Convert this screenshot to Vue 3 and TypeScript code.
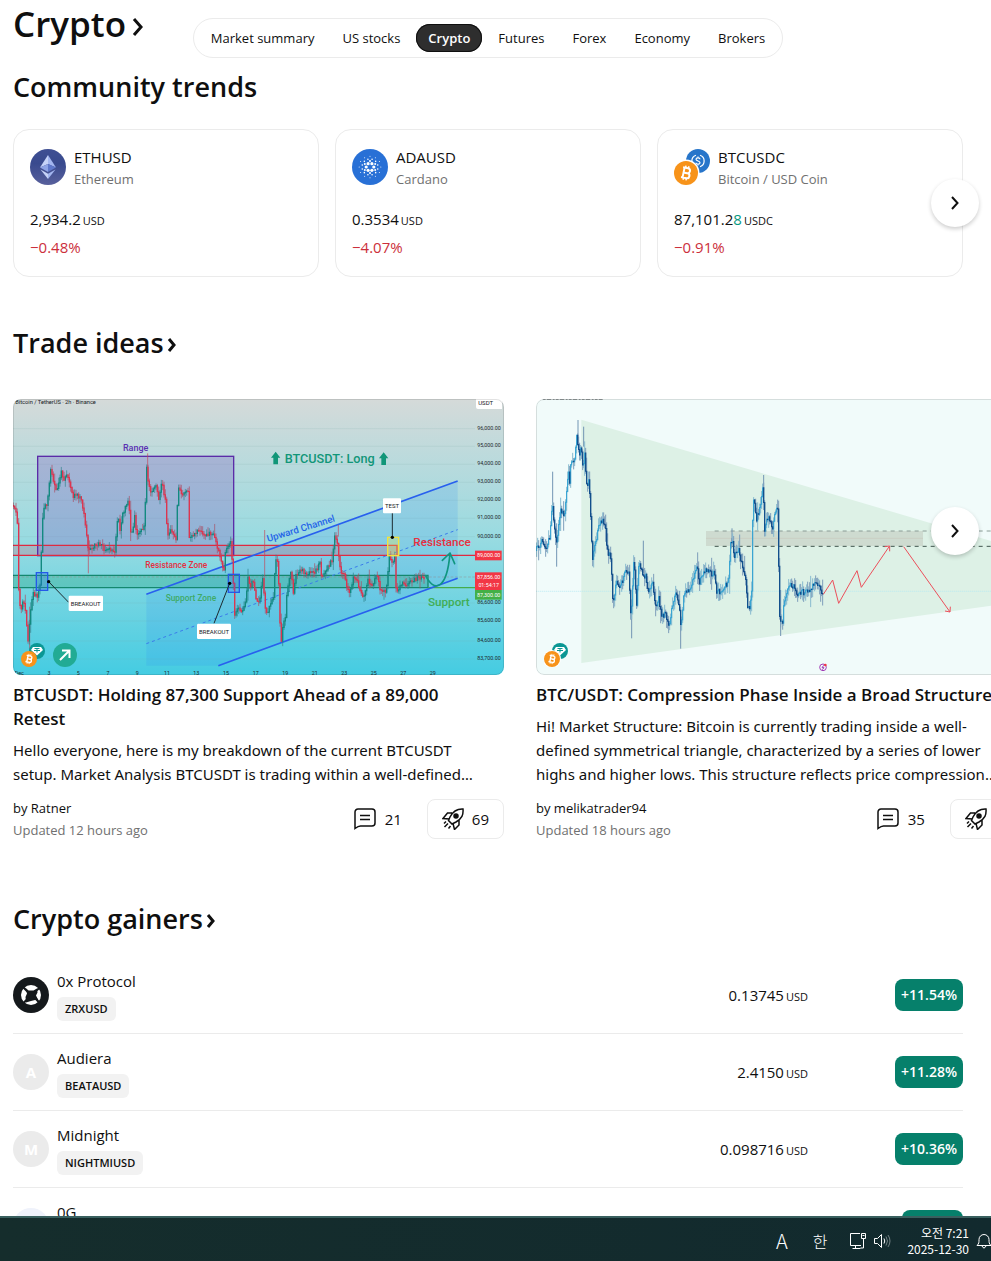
<script setup lang="ts">
type Point = [number, number]

interface Candles {
  upBody: string
  downBody: string
  upWick: string
  downWick: string
}

interface Trend {
  icon: 'eth' | 'ada' | 'btcusdc'
  symbol: string
  name: string
  price: string
  tick: string
  unit: string
  change: string
}

interface Idea {
  id: 'long' | 'triangle'
  title: string[]
  text: string[]
  author: string
  updated: string
  comments: number
  boosts: number
}

interface Gainer {
  name: string
  symbol: string
  letter: string
  tone: string
  price: string
  change: string
}

const tabs = ['Market summary', 'US stocks', 'Crypto', 'Futures', 'Forex', 'Economy', 'Brokers']
const activeTab = 'Crypto'

const trends: Trend[] = [
  { icon: 'eth', symbol: 'ETHUSD', name: 'Ethereum', price: '2,934.2', tick: '', unit: 'USD', change: '−0.48%' },
  { icon: 'ada', symbol: 'ADAUSD', name: 'Cardano', price: '0.3534', tick: '', unit: 'USD', change: '−4.07%' },
  { icon: 'btcusdc', symbol: 'BTCUSDC', name: 'Bitcoin / USD Coin', price: '87,101.2', tick: '8', unit: 'USDC', change: '−0.91%' },
]

const ideas: Idea[] = [
  {
    id: 'long',
    title: ['BTCUSDT: Holding 87,300 Support Ahead of a 89,000', 'Retest'],
    text: ['Hello everyone, here is my breakdown of the current BTCUSDT', 'setup. Market Analysis BTCUSDT is trading within a well-defined…'],
    author: 'Ratner',
    updated: 'Updated 12 hours ago',
    comments: 21,
    boosts: 69,
  },
  {
    id: 'triangle',
    title: ['BTC/USDT: Compression Phase Inside a Broad Structure'],
    text: [
      'Hi! Market Structure: Bitcoin is currently trading inside a well-',
      'defined symmetrical triangle, characterized by a series of lower',
      'highs and higher lows. This structure reflects price compression…',
    ],
    author: 'melikatrader94',
    updated: 'Updated 18 hours ago',
    comments: 35,
    boosts: 80,
  },
]

const gainers: Gainer[] = [
  { name: '0x Protocol', symbol: 'ZRXUSD', letter: '', tone: 'dark', price: '0.13745', change: '+11.54%' },
  { name: 'Audiera', symbol: 'BEATAUSD', letter: 'A', tone: 'grey', price: '2.4150', change: '+11.28%' },
  { name: 'Midnight', symbol: 'NIGHTMIUSD', letter: 'M', tone: 'grey', price: '0.098716', change: '+10.36%' },
  { name: '0G', symbol: '', letter: '', tone: 'pale', price: '', change: '' },
]

const longPath: Point[] = [
  [40, 345], [52, 360], [58, 420], [60, 600], [66, 670], [74, 630], [80, 660], [88, 750], [95, 660], [103, 610],
  [118, 615], [126, 570], [130, 400], [138, 340], [145, 350], [150, 300], [156, 240], [165, 275], [175, 305], [187, 240],
  [195, 265], [204, 250], [215, 290], [225, 320], [235, 310], [248, 330], [258, 380], [264, 440], [270, 485], [290, 462],
  [308, 458], [318, 480], [330, 470], [347, 492], [352, 440], [358, 365], [363, 420], [372, 370], [387, 330], [392, 360],
  [397, 440], [405, 400], [407, 370], [412, 420], [420, 430], [438, 410], [441, 290], [443, 225], [450, 290], [460, 305],
  [472, 280], [480, 325], [490, 275], [500, 330], [506, 430], [520, 420], [532, 445], [538, 290], [550, 310], [568, 300],
  [572, 440], [600, 420], [620, 435], [645, 425], [655, 470], [668, 510], [677, 545], [680, 480], [697, 450], [703, 560],
  [708, 680], [718, 650], [727, 670], [740, 640], [748, 560], [755, 590], [762, 560], [772, 620], [782, 640], [792, 560],
  [798, 640], [805, 670], [816, 640], [824, 620], [830, 510], [838, 510], [842, 650], [847, 755], [855, 690], [858, 710],
  [865, 600], [877, 540], [885, 615], [891, 550], [910, 540], [930, 550], [955, 540], [963, 505], [969, 560], [980, 540],
  [1000, 510], [1007, 440], [1015, 450], [1025, 540], [1035, 550], [1047, 600], [1055, 600], [1064, 560], [1075, 570],
  [1085, 600], [1095, 625], [1107, 570], [1120, 590], [1135, 550], [1142, 590], [1162, 610], [1172, 500], [1182, 520],
  [1188, 500], [1193, 610], [1205, 580], [1230, 580], [1250, 565], [1274, 560],
]

const trianglePath: Point[] = [
  [20, 480], [40, 450], [50, 480], [62, 440], [70, 345], [75, 400], [83, 455], [95, 350], [105, 380], [115, 290],
  [118, 230], [121, 290], [125, 220], [137, 210], [143, 140], [152, 195], [157, 165], [162, 240], [168, 180], [172, 290],
  [180, 265], [187, 420], [190, 505], [200, 460], [210, 400], [220, 390], [230, 420], [235, 480], [245, 500], [252, 640],
  [262, 580], [275, 590], [290, 540], [300, 550], [306, 700], [315, 500], [323, 640], [330, 510], [340, 550], [350, 560],
  [360, 610], [370, 570], [380, 650], [388, 620], [400, 680], [410, 670], [420, 710], [430, 650], [440, 610], [450, 640],
  [456, 705], [465, 610], [480, 600], [495, 560], [502, 520], [512, 575], [530, 540], [545, 550], [558, 545], [562, 610],
  [575, 600], [598, 580], [605, 450], [612, 450], [615, 500], [630, 480], [640, 530], [650, 560], [656, 650], [661, 660],
  [668, 600], [672, 310], [683, 390], [695, 340], [702, 285], [707, 430], [712, 390], [720, 380], [730, 420], [742, 350],
  [748, 360], [750, 680], [762, 700], [765, 630], [772, 620], [782, 580], [795, 590], [807, 620], [820, 605], [840, 600],
  [860, 575], [870, 590], [880, 605],
]

function priceAt(points: Point[], x: number): number {
  for (let i = 1; i < points.length; i++) {
    if (x <= points[i][0]) {
      const [x0, y0] = points[i - 1]
      const [x1, y1] = points[i]
      return y0 + ((y1 - y0) * (x - x0)) / (x1 - x0)
    }
  }
  return points[points.length - 1][1]
}

function noise(seed: number): number {
  const v = Math.sin(seed * 127.1 + 11.7) * 43758.5453
  return v - Math.floor(v)
}

// Turns a rough price line into candle bodies and wicks.
function buildCandles(points: Point[], step: number, jitter: number, wick: number): Candles {
  const out: Candles = { upBody: '', downBody: '', upWick: '', downWick: '' }
  const end = points[points.length - 1][0]
  let open = points[0][1]
  for (let x = points[0][0]; x < end; x += step) {
    const close = priceAt(points, x + step) + (noise(x) - 0.5) * jitter
    const top = Math.min(open, close)
    const bottom = Math.max(open, close) + 3
    const longWick = noise(x + 3) > 0.85 ? 2 : 1
    const high = top - noise(x + 1) * wick * longWick
    const low = bottom + noise(x + 2) * wick * longWick
    const body = `M${x} ${top.toFixed(1)}V${bottom.toFixed(1)}`
    const line = `M${x} ${high.toFixed(1)}V${low.toFixed(1)}`
    if (close < open) {
      out.upBody += body
      out.upWick += line
    } else {
      out.downBody += body
      out.downWick += line
    }
    open = close
  }
  return out
}

const longCandles = buildCandles(longPath, 4, 12, 15)
const triangleCandles = buildCandles(trianglePath, 3, 18, 24)

const priceScale: [string, number][] = [
  ['96,000.00', 113], ['95,000.00', 166], ['94,000.00', 220], ['93,000.00', 274], ['92,000.00', 328],
  ['91,000.00', 382], ['90,000.00', 437], ['86,600.00', 636], ['85,600.00', 690], ['84,600.00', 750], ['83,700.00', 804],
]
const dateScale: [string, number][] = [
  ['Dec', 58], ['3', 147], ['5', 235], ['7', 324], ['9', 412], ['11', 501], ['13', 589], ['15', 678],
  ['17', 767], ['19', 856], ['21', 944], ['23', 1033], ['25', 1121], ['27', 1210], ['29', 1298],
]

function ring(count: number, radius: number, size: number, phase: number) {
  return Array.from({ length: count }, (_, i) => {
    const a = ((i + phase) * 2 * Math.PI) / count
    return { x: 18 + radius * Math.cos(a), y: 18 + radius * Math.sin(a), r: size }
  })
}
const adaDots = [...ring(6, 3.8, 1.6, 0), ...ring(6, 6, 1, 0.5), ...ring(12, 8, 0.8, 0.5), ...ring(12, 10.8, 0.5, 0)]
</script>

<template>
  <div class="desktop">
    <main class="page">
      <header class="top">
        <h1><a href="#crypto">Crypto<svg class="chev-lg" viewBox="0 0 12 20" aria-hidden="true"><path d="M2 2l7 8-7 8" /></svg></a></h1>
        <nav class="tabs" aria-label="Markets">
          <a v-for="tab in tabs" :key="tab" href="#" class="tab" :class="{ active: tab === activeTab }">{{ tab }}</a>
        </nav>
      </header>

      <section class="trends">
        <h2>Community trends</h2>
        <div class="carousel">
          <div class="trend-grid">
            <a v-for="t in trends" :key="t.symbol" href="#" class="trend">
              <span class="trend-head">
                <svg v-if="t.icon === 'eth'" class="coin" viewBox="0 0 36 36" aria-hidden="true">
                  <defs>
                    <linearGradient id="ethbg" x1="0" y1="0" x2="0" y2="1">
                      <stop offset="0" stop-color="#3f4f93" /><stop offset=".4" stop-color="#394a8e" /><stop offset="1" stop-color="#58609c" />
                    </linearGradient>
                  </defs>
                  <circle cx="18" cy="18" r="18" fill="url(#ethbg)" />
                  <path d="M18 6l-8 12.5 8-3.5z" fill="#c6d3f8" /><path d="M18 6l8 12.5-8-3.5z" fill="#a3b6f0" />
                  <path d="M18 15l-8 3.5 8 4.5z" fill="#8ea3e6" /><path d="M18 15l8 3.5-8 4.5z" fill="#5f78cb" />
                  <path d="M10.500 20.500l7.500 4.300V30z" fill="#c6d3f8" /><path d="M25.500 20.500L18 24.800V30z" fill="#a3b6f0" />
                </svg>
                <svg v-else-if="t.icon === 'ada'" class="coin" viewBox="0 0 36 36" aria-hidden="true">
                  <circle cx="18" cy="18" r="18" fill="#2870d6" />
                  <circle v-for="(d, i) in adaDots" :key="i" :cx="d.x" :cy="d.y" :r="d.r" fill="#fff" />
                </svg>
                <svg v-else class="coin" viewBox="0 0 36 36" aria-hidden="true">
                  <circle cx="24" cy="12" r="12" fill="#2775ca" />
                  <g fill="none" stroke="#fff" stroke-width="1.200">
                    <path d="M22 6.300a6 6 0 0 0 0 11.400M26 6.300a6 6 0 0 1 0 11.400" />
                    <path d="M26 10.300c0-2-4-2-4 0s4 1.400 4 3.400-4 2-4 0M24 7.500v1.300M24 15.200v1.300" />
                  </g>
                  <circle cx="12" cy="24" r="13.500" fill="#fff" />
                  <circle cx="12" cy="24" r="12" fill="#f7931a" />
                  <g transform="translate(12 24) rotate(12)" fill="none" stroke="#fff" stroke-width="2">
                    <path d="M-4-5h5a2.400 2.400 0 0 1 0 5h-3.500M-4 5h5.500a2.500 2.500 0 0 0 0-5M-2.500-5V5" />
                    <path d="M-1.500-7.200V-5M1.500-7.200V-5M-1.500 5v2.200M1.500 5v2.200" stroke-width="1.500" />
                  </g>
                </svg>
                <span class="trend-names"><span class="symbol">{{ t.symbol }}</span><span class="muted">{{ t.name }}</span></span>
              </span>
              <span class="trend-price">{{ t.price }}<span class="tick">{{ t.tick }}</span><small>{{ t.unit }}</small></span>
              <span class="trend-change">{{ t.change }}</span>
            </a>
          </div>
          <button type="button" class="next next-trend" aria-label="Next trends">
            <svg viewBox="0 0 10 16" aria-hidden="true"><path d="M2 2l5.500 6L2 14" /></svg>
          </button>
        </div>
      </section>

      <section class="ideas">
        <h2><a href="#ideas">Trade ideas<svg class="chev" viewBox="0 0 10 16" aria-hidden="true"><path d="M2 2l5 6-5 6" /></svg></a></h2>
        <div class="carousel">
          <div class="idea-track">
            <article v-for="idea in ideas" :key="idea.id" class="idea">
              <div class="thumb">
                <svg v-if="idea.id === 'long'" class="chart" viewBox="39 27 1473 828" preserveAspectRatio="xMidYMid slice" role="img" aria-label="BTCUSDT chart">
                  <defs>
                    <linearGradient id="sky" x1="0" y1="0" x2="0" y2="1">
                      <stop offset="0" stop-color="#d5dad9" /><stop offset=".5" stop-color="#99dbe1" /><stop offset="1" stop-color="#44cce2" />
                    </linearGradient>
                  </defs>
                  <rect x="39" y="27" width="1473" height="828" fill="url(#sky)" />
                  <path v-for="[label, y] in priceScale" :key="'g' + label" :d="`M39 ${y + 3}H1425`" stroke="#7fa9ad" stroke-opacity=".25" stroke-width="2" />
                  <path d="M439 613L1373 273V565L655 827H439z" fill="#2f8cf5" fill-opacity=".17" />
                  <rect x="39" y="466" width="1152" height="30" fill="#e33b4e" fill-opacity=".2" />
                  <rect x="39" y="556" width="1245" height="37" fill="#1ea172" fill-opacity=".3" />
                  <rect x="113" y="199" width="588" height="298" fill="#8069c4" fill-opacity=".34" stroke="#5b2ca8" stroke-width="4" />
                  <path d="M39 466H1191V496M39 496H1425" fill="none" stroke="#df2a40" stroke-width="4" />
                  <path d="M39 556H1284V593M39 593H1284" fill="none" stroke="#14886f" stroke-width="4" />
                  <path d="M1284 593H1425" stroke="#45ac4b" stroke-width="4" />
                  <path d="M39 561H1425" stroke="#9a7a7a" stroke-opacity=".6" stroke-width="2" stroke-dasharray="8 5" />
                  <path d="M439 613L1373 273M655 827L1373 565" stroke="#2860ee" stroke-width="5" />
                  <path d="M439 761L1373 419" stroke="#3a7bea" stroke-width="3" stroke-dasharray="9 9" />
                  <path d="M89 650V785M265 440V550M443 190V260M794 420V560M1015 405V440" stroke="#c44357" stroke-width="2" />
                  <path :d="longCandles.upWick" stroke="#2f8289" stroke-width="2" />
                  <path :d="longCandles.downWick" stroke="#a94b62" stroke-width="2" />
                  <path :d="longCandles.upBody" stroke="#128a80" stroke-width="4" />
                  <path :d="longCandles.downBody" stroke="#dd3550" stroke-width="4" />
                  <g fill="#2962ff" fill-opacity=".22" stroke="#2459e8" stroke-width="4">
                    <rect x="109" y="548" width="34" height="53" /><rect x="685" y="553" width="33" height="54" />
                  </g>
                  <rect x="1163" y="442" width="33" height="55" fill="#f4e94c" fill-opacity=".3" stroke="#f2e33c" stroke-width="4" />
                  <path d="M146 575L206 637M689 580L642 700M1177 442V368" stroke="#1c2b30" stroke-width="3" />
                  <circle cx="146" cy="575" r="5" /><circle cx="689" cy="580" r="5" /><circle cx="1177" cy="442" r="5" />
                  <g fill="#fff">
                    <rect x="206" y="617" width="103" height="46" rx="4" /><rect x="591" y="701" width="102" height="46" rx="4" /><rect x="1149" y="325" width="54" height="45" rx="3" />
                    <path d="M1428 27h78v30h-72q-6 0-6-6z" />
                  </g>
                  <g font-size="18" text-anchor="middle" fill="#15191c">
                    <text x="257" y="647">BREAKOUT</text><text x="642" y="731">BREAKOUT</text><text x="1176" y="355">TEST</text><text x="1457" y="44">USDT</text>
                  </g>
                  <path d="M1277 557C1300 605 1340 605 1350 490M1327 511L1350 489 1364 521" fill="none" stroke="#109680" stroke-width="5" stroke-linecap="round" stroke-linejoin="round" />
                  <text x="46" y="41" font-size="17" fill="#15191c">Bitcoin / TetherUS · 2h · Binance</text>
                  <text x="407" y="182" font-size="27" font-weight="500" text-anchor="middle" fill="#5b31b2">Range</text>
                  <text x="436" y="535" font-size="25" font-weight="500" fill="#e52e3f">Resistance Zone</text>
                  <text x="497" y="634" font-size="25" font-weight="500" fill="#3faa66">Support Zone</text>
                  <text x="989" y="220" font-size="38" font-weight="500" text-anchor="middle" fill="#119678">BTCUSDT: Long</text>
                  <path d="M827 185l14 18h-7v20h-14v-20h-7zM1151 187l14 18h-7v20h-14v-20h-7z" fill="#119678" />
                  <text transform="translate(804 456) rotate(-17)" font-size="29" font-weight="500" fill="#2464e8">Upward Channel</text>
                  <text x="1240" y="468" font-size="35" font-weight="500" fill="#e8303f">Resistance</text>
                  <text x="1284" y="647" font-size="35" font-weight="500" fill="#40ad55">Support</text>
                  <g font-size="16" text-anchor="middle" fill="#1d292c">
                    <text v-for="[label, y] in priceScale" :key="label" x="1467" :y="y + 6">{{ label }}</text>
                    <text v-for="[label, x] in dateScale" :key="label" :x="x" y="856">{{ label }}</text>
                  </g>
                  <rect x="1425" y="482" width="80" height="29" fill="#f23645" /><rect x="1425" y="547" width="80" height="53" fill="#f23645" /><rect x="1425" y="600" width="80" height="29" fill="#43b047" />
                  <g font-size="16" text-anchor="middle" fill="#fff">
                    <text x="1466" y="502">89,000.00</text><text x="1466" y="566">87,856.00</text><text x="1466" y="591">01:54:17</text><text x="1466" y="620">87,300.00</text>
                  </g>
                </svg>
                <svg v-else class="chart" viewBox="18 27 1473 828" preserveAspectRatio="xMidYMid slice" role="img" aria-label="BTC/USDT chart">
                  <rect x="18" y="27" width="1473" height="828" fill="#f1fbfa" />
                  <path d="M154 89L1491 485V632L154 819z" fill="#ddf1e6" />
                  <rect x="528" y="423" width="651" height="45" fill="#b9bdb3" fill-opacity=".42" />
                  <path d="M528 445H1179" stroke="#c3b8ae" stroke-width="1" />
                  <path d="M554 423H1491" stroke="#8a9c96" stroke-width="3" stroke-dasharray="12 12" />
                  <path d="M554 469H1491" stroke="#41564f" stroke-width="3" stroke-dasharray="12 12" />
                  <path d="M18 604H1491" stroke="#b4eaf2" stroke-width="2" stroke-dasharray="4 2" />
                  <path d="M68 245V345M144 90V140M161 110V170M80 400V530M305 650V745M340 452V550M452 690V776M606 415V470M701 255V300M752 600V738" stroke="#7295b4" stroke-width="3" />
                  <path :d="triangleCandles.upWick" stroke="#88bbcf" stroke-width="3" />
                  <path :d="triangleCandles.downWick" stroke="#7d9dbb" stroke-width="3" />
                  <path :d="triangleCandles.upBody" stroke="#2a9fd2" stroke-width="3" />
                  <path :d="triangleCandles.downBody" stroke="#124f8c" stroke-width="4" />
                  <path d="M880 613L908 570 926 640 981 542 994 592 1078 469M1064 470L1079 468V484M1121 470L1260 666M1245 663L1260 666 1261 650" fill="none" stroke="#ec4f5b" stroke-width="3" />
                  <circle cx="879" cy="832" r="10" fill="none" stroke="#a13bb5" stroke-width="3" /><path d="M881 826l-5 7h6l-5 6" fill="none" stroke="#a13bb5" stroke-width="3" /><circle cx="886" cy="825" r="4" fill="#f23645" />
                  <path d="M38 28H218" stroke="#7d8587" stroke-width="3" stroke-dasharray="9 3 14 4 6 3" />
                </svg>
                <span class="thumb-icons">
                  <svg class="pair" viewBox="0 0 24 24" aria-hidden="true">
                    <circle cx="16" cy="8" r="8" fill="#0b9794" />
                    <path d="M12 4h8l2 3-6 5.500L10 7z" fill="#fff" /><path d="M13.500 5.500h5M16 5.500v4M13 7.500h6" stroke="#0b9794" fill="none" />
                    <circle v-if="idea.id === 'triangle'" cx="8" cy="16" r="9" fill="#fff" />
                    <circle cx="8" cy="16" r="8" fill="#f7931a" />
                    <g transform="translate(8 16) rotate(12)" fill="none" stroke="#fff" stroke-width="1.400">
                      <path d="M-3-3.200h4a1.500 1.500 0 0 1 0 3.200h-2.500M-3 3.200h4.200a1.600 1.600 0 0 0 0-3.200M-1.600-3.200V3.200" />
                      <path d="M-1-5v1.800M1-5v1.800M-1 3.200V5M1 3.200V5" stroke-width="1" />
                    </g>
                  </svg>
                  <svg v-if="idea.id === 'long'" class="direction" viewBox="0 0 24 24" aria-hidden="true">
                    <circle cx="12" cy="12" r="12" fill="#22ab94" />
                    <path d="M7 17l9-9M9 7.500h7.500V15" fill="none" stroke="#fff" stroke-width="2" />
                  </svg>
                </span>
              </div>
              <h3><span v-for="line in idea.title" :key="line">{{ line }}</span></h3>
              <p><span v-for="line in idea.text" :key="line">{{ line }}</span></p>
              <footer>
                <div class="byline"><a href="#">by {{ idea.author }}</a><span class="muted">{{ idea.updated }}</span></div>
                <a class="comments" href="#" aria-label="Comments">
                  <svg viewBox="0 0 22 22" aria-hidden="true"><path d="M1 20.500V4a3 3 0 0 1 3-3h14a3 3 0 0 1 3 3v11a3 3 0 0 1-3 3H6.500c-2 0-3.500 1-5.500 2.500zM6 7.500h10M6 11.500h10" /></svg>{{ idea.comments }}
                </a>
                <button type="button" class="boost">
                  <svg viewBox="0 0 22 22" aria-hidden="true">
                    <path d="M21 1c-6-.3-10 2-13 8l-1.500 3.500 3.500 3.500L14 14c6-3.500 7.500-7 7-13zM10 5H5.500L1 10.500l6.500.5M17 12v5l-4.500 4.500-1.500-6M4 13.500l-2 2M6 15.500L2.500 19M8.500 18l-2 2.500" />
                    <circle cx="14" cy="8" r="2" />
                  </svg>{{ idea.boosts }}
                </button>
              </footer>
            </article>
          </div>
          <button type="button" class="next next-idea" aria-label="Next ideas">
            <svg viewBox="0 0 10 16" aria-hidden="true"><path d="M2 2l5.500 6L2 14" /></svg>
          </button>
        </div>
      </section>

      <section class="gainers">
        <h2><a href="#gainers">Crypto gainers<svg class="chev" viewBox="0 0 10 16" aria-hidden="true"><path d="M2 2l5 6-5 6" /></svg></a></h2>
        <table aria-label="Crypto gainers">
          <tbody>
            <tr v-for="g in gainers" :key="g.name">
              <td>
                <div class="asset">
                  <span class="avatar" :class="g.tone">
                    <svg v-if="g.tone === 'dark'" viewBox="0 0 36 36" aria-hidden="true">
                      <circle cx="18" cy="18" r="10" fill="#fff" />
                      <path d="M12.500 11l3 2.500h5l3.500-2 .5 4-1.500 3 2.500 5-3.500-.5-4 1-5 1.500-.5-5.500 1.500-3.500z" fill="#15191c" />
                      <path d="M9.500 9.500l6 6M27 10.500l-6 5M10 26.500l6-6M26.500 26l-5-6" stroke="#15191c" stroke-width="2.200" />
                    </svg>
                    {{ g.letter }}
                  </span>
                  <div class="asset-text"><a href="#">{{ g.name }}</a><span class="ticker">{{ g.symbol }}</span></div>
                </div>
              </td>
              <td class="price"><template v-if="g.price">{{ g.price }}<small>USD</small></template></td>
              <td class="change"><span>{{ g.change }}</span></td>
            </tr>
          </tbody>
        </table>
      </section>
    </main>

    <div class="taskbar">
      <span class="ime">A</span>
      <span class="lang">한</span>
      <svg class="net" viewBox="0 0 18 18" aria-hidden="true"><path d="M11 1.500H1.500v12H12M6.500 13.500v3M3.500 16.500h8M12.500 1.500h4v5h-4zM14.500 6.500v9.500h-3M13.500 3.500h2" /></svg>
      <svg class="sound" viewBox="0 0 18 18" aria-hidden="true"><path d="M1.500 6.500h3l4-4v13l-4-4h-3z" /><path d="M11 6.500q1.500 2.500 0 5" /><path d="M13 4.500q3 4.500 0 9M15 3q4 6 0 12" opacity=".4" /></svg>
      <span class="clock"><span>오전 7:21</span><span>2025-12-30</span></span>
      <svg class="bell" viewBox="0 0 16 18" aria-hidden="true"><path d="M1 13.500h14c-2-2-2-3-2-6a5 5 0 0 0-10 0c0 3 0 4-2 6zM6 14q2 4 4 0" /></svg>
    </div>
  </div>
</template>

<style>
body {
  margin: 0;
  background: #fff;
}
</style>

<style scoped>
* {
  box-sizing: border-box;
}
.desktop {
  display: flex;
  flex-direction: column;
  height: 100vh;
  color: #0f0f0f;
  font-family: 'Trebuchet MS', 'Open Sans', 'Noto Sans', sans-serif;
  font-size: 15px;
  line-height: 24px;
}
a {
  color: inherit;
  text-decoration: none;
}
h1, h2, h3, p {
  margin: 0;
}
svg {
  display: block;
  flex: none;
}
.page {
  flex: 1;
  min-height: 0;
  overflow: hidden;
  padding: 0 28px 0 13px;
}
.top {
  display: grid;
  grid-template-columns: 1fr auto 1fr;
  align-items: end;
  height: 58px;
}
h1 {
  align-self: start;
  font-size: 35px;
  line-height: 48px;
  font-weight: 600;
}
h2 {
  font-size: 27px;
  line-height: 36px;
  font-weight: 600;
}
h1 a, h2 a {
  display: inline-flex;
  align-items: center;
}
.chev, .chev-lg, .next svg {
  fill: none;
  stroke: #0f0f0f;
  stroke-width: 3;
}
.chev {
  width: 10px;
  height: 16px;
  margin: 4px 0 0 3px;
}
.chev-lg {
  width: 12px;
  height: 20px;
  margin: 6px 0 0 6px;
}
.tabs {
  display: flex;
  gap: 4px;
  padding: 5px;
  border: 1px solid #ebebeb;
  border-radius: 20px;
  font-size: 13px;
}
.tab {
  padding: 0 12px;
  line-height: 28px;
  border-radius: 14px;
}
.tab.active {
  background: #2e2e2e;
  color: #fff;
  font-weight: 600;
  box-shadow: inset 0 0 0 1px #0f0f0f;
}
.trends {
  padding-top: 11px;
}
.carousel {
  position: relative;
}
.trend-grid {
  display: grid;
  grid-template-columns: repeat(3, 1fr);
  gap: 16px;
  margin-top: 24px;
}
.trend {
  display: flex;
  flex-direction: column;
  height: 148px;
  padding: 16px;
  border: 1px solid #ebebeb;
  border-radius: 16px;
}
.trend-head {
  display: flex;
  align-items: center;
  gap: 8px;
  height: 42px;
}
.coin {
  width: 36px;
  height: 36px;
}
.trend-names {
  display: flex;
  flex-direction: column;
  padding-top: 2px;
  line-height: 22px;
}
.muted {
  color: #707070;
  font-size: 13px;
}
.trend-price {
  margin-top: 19px;
}
.tick {
  color: #089981;
}
small {
  margin-left: 2px;
  font-size: 11px;
  line-height: 1;
}
.trend-change {
  margin-top: 4px;
  color: #cc2f3c;
}
.next {
  position: absolute;
  right: -16px;
  display: flex;
  align-items: center;
  justify-content: center;
  width: 48px;
  height: 48px;
  padding: 0;
  border: 0;
  border-radius: 50%;
  background: #fff;
  box-shadow: 0 2px 4px rgba(0, 0, 0, 0.2);
}
.next svg {
  width: 10px;
  height: 16px;
  stroke-width: 2;
}
.next-trend {
  top: 50px;
}
.next-idea {
  top: 108px;
}
.ideas {
  padding-top: 48px;
}
.idea-track {
  display: flex;
  gap: 32px;
  margin-top: 38px;
}
.idea {
  flex: 0 0 calc(50% + 16px);
  min-width: 0;
}
.thumb {
  position: relative;
  overflow: hidden;
  border-radius: 8px;
}
.thumb::after {
  content: '';
  position: absolute;
  inset: 0;
  border: 1px solid rgba(15, 15, 15, 0.12);
  border-radius: 8px;
}
.chart {
  width: 100%;
  height: auto;
  font-family: Roboto, sans-serif;
}
.thumb-icons {
  position: absolute;
  left: 8px;
  bottom: 8px;
  display: flex;
  align-items: center;
  gap: 8px;
}
.pair, .direction {
  width: 24px;
  height: 24px;
}
h3 {
  margin-top: 8px;
  font-size: 17px;
  line-height: 24px;
  font-weight: 600;
}
h3 span, p span {
  display: block;
  white-space: nowrap;
}
p {
  margin-top: 7px;
  font-family: 'Trebuchet MS', 'Noto Sans', sans-serif;
}
.idea footer {
  display: flex;
  align-items: center;
  margin-top: 11px;
}
.byline {
  display: flex;
  flex: 1;
  flex-direction: column;
  font-size: 13px;
  line-height: 22px;
}
.comments {
  display: flex;
  align-items: center;
  gap: 9px;
  margin-right: 25px;
}
.boost {
  display: flex;
  align-items: center;
  gap: 8px;
  height: 40px;
  padding: 0 14px;
  border: 1px solid #ebebeb;
  border-radius: 8px;
  background: #fff;
  color: inherit;
  font: inherit;
}
.comments svg, .boost svg {
  width: 22px;
  height: 22px;
  fill: none;
  stroke: #0f0f0f;
  stroke-width: 1.5;
}
.boost circle {
  fill: #0f0f0f;
}
.gainers {
  padding-top: 60px;
}
table {
  width: 100%;
  margin-top: 20px;
  border-collapse: separate;
  border-spacing: 0;
  table-layout: fixed;
}
td {
  height: 77px;
  padding: 12px 0;
  border-bottom: 1px solid #ebebeb;
}
.asset {
  display: flex;
  align-items: center;
  gap: 8px;
}
.avatar {
  display: flex;
  align-items: center;
  justify-content: center;
  width: 36px;
  height: 36px;
  border-radius: 50%;
  color: #fff;
  font-weight: 700;
}
.avatar svg {
  width: 36px;
  height: 36px;
}
.dark {
  background: #15191c;
}
.grey {
  background: #ebebeb;
}
.pale {
  background: #eff2fb;
}
.asset-text {
  display: flex;
  flex-direction: column;
  align-items: flex-start;
  gap: 4px;
}
.ticker {
  height: 24px;
  padding: 0 8px;
  border-radius: 6px;
  background: #f2f2f2;
  font-size: 11px;
  font-weight: 600;
}
.price {
  text-align: right;
}
.change {
  width: 155px;
}
.change span {
  display: block;
  width: fit-content;
  min-width: 61px;
  height: 32px;
  margin-left: auto;
  padding: 0 6px;
  border-radius: 8px;
  background: #06806b;
  color: #fff;
  font-size: 14px;
  font-weight: 600;
  line-height: 32px;
}
.taskbar {
  display: flex;
  flex: none;
  align-items: center;
  justify-content: flex-end;
  height: 45px;
  padding-top: 2px;
  border-top: 2px solid #39605f;
  background: linear-gradient(90deg, #152d2c, #122a2e);
  color: #fff;
  font-family: 'Noto Sans CJK KR', sans-serif;
}
.taskbar svg {
  width: 18px;
  height: 18px;
  fill: none;
  stroke: #fff;
}
.taskbar .sound {
  margin: 0 16px 0 6px;
}
.taskbar .bell {
  width: 16px;
  margin: 0 -1px 0 7px;
}
.ime {
  margin-right: 25px;
  font-size: 20px;
  font-weight: 300;
}
.lang {
  margin-right: 22px;
  font-size: 16px;
  font-weight: 300;
}
.clock {
  display: flex;
  flex-direction: column;
  align-items: flex-end;
  font-size: 12px;
  line-height: 16px;
}
</style>
